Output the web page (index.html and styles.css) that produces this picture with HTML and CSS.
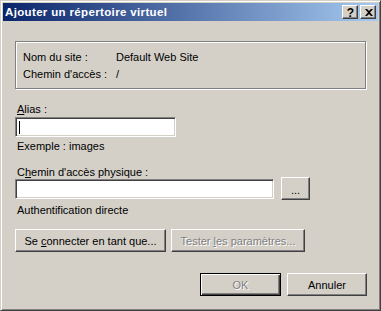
FILE: index.html
```html
<!DOCTYPE html>
<html lang="fr">
<head>
<meta charset="utf-8">
<title>Ajouter un répertoire virtuel</title>
<link rel="stylesheet" href="styles.css">
</head>
<body>
<div class="window">
  <div class="titlebar">
    <span class="title">Ajouter un répertoire virtuel</span>
    <div class="caption-btns">
      <div class="cap help">?</div>
      <div class="cap close">
        <svg width="8" height="7" viewBox="0 0 8 7"><path d="M0 0h2l2 2 2-2h2L5 3.5 8 7H6L4 5 2 7H0l3-3.5z" fill="#000"/></svg>
      </div>
    </div>
  </div>
  <div class="client">
    <div class="group">
      <div class="row"><span class="lbl">Nom du site :</span><span>Default Web Site</span></div>
      <div class="row"><span class="lbl">Chemin d'accès :</span><span>/</span></div>
    </div>
    <div class="label alias-label"><u>A</u>lias :</div>
    <div class="input alias"><span class="caret"></span></div>
    <div class="hint">Exemple : images</div>
    <div class="label path-label">C<u>h</u>emin d'accès physique :</div>
    <div class="path-row">
      <div class="input path"></div>
      <div class="btn browse"><span>...</span></div>
    </div>
    <div class="hint auth">Authentification directe</div>
    <div class="btn-row">
      <div class="btn connect"><span>Se <u>c</u>onnecter en tant que...</span></div>
      <div class="btn test disabled"><span>Tester <u>l</u>es paramètres...</span></div>
    </div>
    <div class="footer">
      <div class="btn default disabled"><span>OK</span></div>
      <div class="btn cancel"><span>Annuler</span></div>
    </div>
  </div>
</div>
</body>
</html>
```
FILE: styles.css
```css
html, body {
  margin: 0;
  padding: 0;
  background: #d4d0c8;
}
body {
  font-family: "Liberation Sans", Arial, sans-serif;
  font-size: 11px;
  color: #000;
}
.window {
  box-sizing: border-box;
  width: 381px;
  height: 311px;
  background: #d4d0c8;
  border: 1px solid;
  border-color: #d4d0c8 #404040 #404040 #d4d0c8;
  box-shadow: inset 1px 1px #fff, inset -1px -1px #808080;
  padding: 2px;
  display: flex;
  flex-direction: column;
}
.titlebar {
  height: 18px;
  flex: none;
  background: linear-gradient(to right, #0a246a, #a6caf0);
  display: flex;
  align-items: center;
  justify-content: space-between;
}
.title {
  color: #fff;
  font-weight: bold;
  font-size: 11.5px;
  letter-spacing: 0.35px;
  padding-left: 2px;
  line-height: 18px;
  white-space: nowrap;
}
.caption-btns {
  display: flex;
  gap: 2px;
  margin-right: 2px;
}
.cap {
  box-sizing: border-box;
  width: 16px;
  height: 14px;
  background: #d4d0c8;
  border: 1px solid;
  border-color: #fff #404040 #404040 #fff;
  box-shadow: inset -1px -1px #808080;
  display: flex;
  align-items: center;
  justify-content: center;
}
.help {
  font-weight: bold;
  font-size: 12px;
  line-height: 12px;
  padding-top: 1px;
  padding-left: 1px;
}
.close svg {
  display: block;
  margin-left: 1px;
}
.client {
  flex: 1;
  display: flex;
  flex-direction: column;
  padding: 20px 0 0 12px;
}
.group {
  box-sizing: border-box;
  width: 351px;
  border: 1px solid #808080;
  box-shadow: inset 1px 1px #fff, 1px 1px #fff;
  padding: 7px 0 5px 7px;
}
.row {
  display: flex;
  height: 17px;
  line-height: 17px;
  white-space: nowrap;
}
.lbl {
  width: 93px;
}
.label, .hint {
  line-height: 13px;
  padding-left: 2px;
  white-space: nowrap;
}
.alias-label {
  margin-top: 14px;
}
.input {
  box-sizing: border-box;
  height: 20px;
  background: #fff;
  border: 1px solid;
  border-color: #808080 #fff #fff #808080;
  box-shadow: inset 1px 1px #404040, inset -1px -1px #d4d0c8;
}
.alias {
  width: 161px;
  margin-top: 1px;
  display: flex;
  align-items: center;
  padding-left: 3px;
}
.caret {
  width: 1px;
  height: 13px;
  background: #000;
}
.hint {
  margin-top: 3px;
}
.path-label {
  margin-top: 13px;
}
.path-row {
  display: flex;
  align-items: flex-start;
  gap: 7px;
}
.path-row .input {
  width: 259px;
}
.btn {
  box-sizing: border-box;
  height: 23px;
  background: #d4d0c8;
  border: 1px solid;
  border-color: #fff #404040 #404040 #fff;
  box-shadow: inset -1px -1px #808080;
  display: flex;
  align-items: center;
  justify-content: center;
  white-space: nowrap;
}
.browse {
  width: 29px;
  margin-top: -2px;
  padding-top: 3px;
}
.auth {
  margin-top: 4px;
}
.btn-row {
  display: flex;
  gap: 5px;
  margin-top: 12px;
}
.connect {
  width: 151px;
}
.test {
  width: 134px;
}
.disabled {
  color: #808080;
  text-shadow: 1px 1px #fff;
}
.footer {
  display: flex;
  gap: 6px;
  margin-top: 21px;
  padding-left: 185px;
}
.default {
  width: 81px;
  border-color: #000;
  box-shadow: inset 1px 1px #fff, inset -1px -1px #404040, inset -2px -2px #808080;
}
.cancel {
  width: 80px;
}
u {
  text-decoration: underline;
  text-underline-offset: 1px;
}
```
